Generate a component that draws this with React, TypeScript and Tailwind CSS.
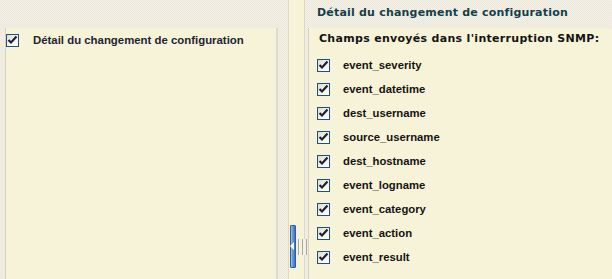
import React from 'react';

const fields = [
  'event_severity',
  'event_datetime',
  'dest_username',
  'source_username',
  'dest_hostname',
  'event_logname',
  'event_category',
  'event_action',
  'event_result',
];

function Check() {
  return (
    <span className="flex h-[13px] w-[13px] shrink-0 items-center justify-center border border-[#1c5180] bg-gradient-to-br from-[#dddbd2] via-[#f4f3ef] to-white">
      <svg width="11" height="11" viewBox="0 0 11 11">
        <path d="M1.5 5 L4 7.5 L9.5 1.5" fill="none" stroke="#21212e" strokeWidth="2.2" />
      </svg>
    </span>
  );
}

const pattern =
  'bg-[#f1eee2] bg-[repeating-conic-gradient(#f3f0e5_0%_25%,#ece9dc_0%_50%)] bg-[length:2px_2px]';

export default function App() {
  return (
    <div className={`flex h-[279px] w-[612px] overflow-hidden ${pattern}`}>
      {/* left panel */}
      <div className="flex w-[278px] shrink-0 flex-col">
        <div className="h-[28px] shrink-0" />
        <div className="ml-[5px] flex-1 border-l border-r-2 border-l-[#d6d3c6] border-r-[#dedbcf] bg-[#f7f3d8]">
          <div className="mt-[4px] flex items-center gap-[14px]">
            <Check />
            <span className="text-[11.4px] font-bold text-[#1d2434] [font-family:'Liberation_Sans',Arial,sans-serif]">
              Détail du changement de configuration
            </span>
          </div>
        </div>
      </div>

      {/* splitter */}
      <div className="ml-[10px] flex w-[17px] shrink-0 border-l border-r border-[#dcd9cb] bg-[#f7f3d8]">
        <div className="mt-[225px] flex h-[43px] items-center gap-[2px] pl-[1px]">
          <div className="relative h-[43px] w-[6px] rounded-[1px] border border-[#2d5fa0] bg-gradient-to-r from-[#9cc3ee] via-[#5d95d8] to-[#3a72c0]">
            <span className="absolute left-[-1px] top-[16px] h-0 w-0 border-y-[4px] border-r-[4px] border-y-transparent border-r-white" />
          </div>
          <div className="flex h-[16px] gap-[1px]">
            <span className="w-[1px] bg-[#a8a8a8]" />
            <span className="w-[1px] bg-[#f7f3d8]" />
            <span className="w-[1px] bg-[#a8a8a8]" />
            <span className="w-[1px] bg-[#f7f3d8]" />
            <span className="w-[1px] bg-[#a8a8a8]" />
          </div>
        </div>
      </div>

      {/* right panel */}
      <div className="ml-[3px] flex flex-1 flex-col">
        <div className="flex h-[28px] shrink-0 items-center pl-[9px] pb-[1px] text-[11px] tracking-[0.2px] text-[#143f4d] [font-family:'DejaVu_Sans',Verdana,sans-serif] font-semibold">
          Détail du changement de configuration
        </div>
        <div className="flex-1 border-l border-[#d6d3c6] bg-[#f7f3d8] pl-[8px]">
          <div className="mt-[3px] pl-[2px] text-[11px] font-bold tracking-[0.3px] text-[#141414] [font-family:'DejaVu_Sans',Verdana,sans-serif]">
            Champs envoyés dans l'interruption SNMP:
          </div>
          <div className="mt-[11px] flex flex-col gap-[11px]">
            {fields.map((f) => (
              <div key={f} className="flex h-[13px] items-center gap-[13px]">
                <Check />
                <span className="text-[11.3px] font-bold text-[#141414] [font-family:'Liberation_Sans',Arial,sans-serif]">
                  {f}
                </span>
              </div>
            ))}
          </div>
        </div>
      </div>
    </div>
  );
}
